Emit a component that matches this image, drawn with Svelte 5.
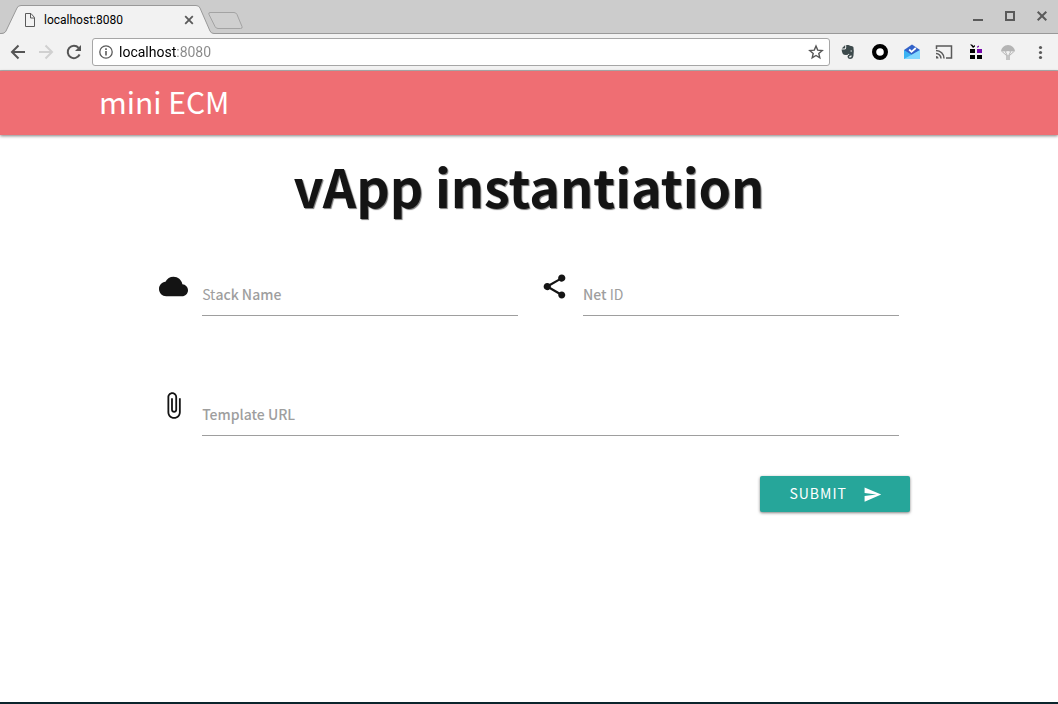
<script>
  let stackName = $state('');
  let netId = $state('');
  let templateUrl = $state('');
  let address = $state('localhost:8080');
</script>

<div class="window">
  <header class="tabstrip">
    <div class="tab">
      <svg class="tab-shape" viewBox="0 0 214 34" aria-hidden="true">
        <path d="M0 34 C3 34 5 33 6 31 L17 8 Q18 5.500 21 5.500 H196 Q199 5.500 200 8 L210 31 Q211 33.500 214 33.500 V34 Z" fill="#f2f2f2" />
        <path d="M0 33.500 C3 33.500 5 33 6 31 L17 8 Q18 5.500 21 5.500 H196 Q199 5.500 200 8 L210 31 Q211 33.500 214 33.500" fill="none" stroke="#999" />
      </svg>
      <svg class="page-icon" width="12" height="16" viewBox="0 0 12 16" fill="none" stroke="#5a5a5a" aria-hidden="true"><path d="M1.500 1.500h5.500l3.500 4v9h-9zM6.500 1.500v4.500h4" /></svg>
      <span class="tab-title">localhost:8080</span>
      <button class="tab-close" aria-label="Close tab">
        <svg width="10" height="10" viewBox="0 0 10 10" stroke="#5a5a5a" stroke-width="1.800"><path d="M1.200 1.200l7.600 7.600M8.800 1.200l-7.600 7.600" /></svg>
      </button>
    </div>
    <button class="new-tab" aria-label="New tab">
      <svg width="36" height="20" viewBox="0 0 36 20" fill="#cfcfcf" stroke="#a3a3a3"><path d="M2 2.500h24q2 0 3 2l5 12q.8 2-1.500 2H10q-2 0-3-2L1 4.500q-.8-2 1-2z" /></svg>
    </button>
    <div class="window-controls">
      <button aria-label="Minimize"><svg width="12" height="12" viewBox="0 0 12 12"><path d="M1 9h10v2H1z" fill="#5a5a5a" /></svg></button>
      <button aria-label="Maximize"><svg width="12" height="12" viewBox="0 0 12 12"><path d="M2 2h8v8H2z" fill="none" stroke="#5a5a5a" stroke-width="2" /></svg></button>
      <button aria-label="Close"><svg width="12" height="12" viewBox="0 0 12 12"><path d="M1.700 1.700l8.600 8.600M10.300 1.700l-8.600 8.600" stroke="#5a5a5a" stroke-width="2" /></svg></button>
    </div>
  </header>

  <div class="toolbar">
    <button class="nav-button" aria-label="Back">
      <svg width="16" height="16" viewBox="0 0 16 16" fill="none" stroke="#555" stroke-width="2"><path d="M15 8H2.500M8.500 1.500L2 8l6.500 6.500" /></svg>
    </button>
    <button class="nav-button" aria-label="Forward" disabled>
      <svg width="16" height="16" viewBox="0 0 16 16" fill="none" stroke="#d0d0d0" stroke-width="2"><path d="M1 8h12.500M7.500 1.500L14 8l-6.500 6.500" /></svg>
    </button>
    <button class="nav-button" aria-label="Reload">
      <svg width="16" height="16" viewBox="0 0 16 16"><path d="M13.600 10.500A6.200 6.200 0 1 1 12.600 3.800" fill="none" stroke="#555" stroke-width="2" /><path d="M15 1v6H9z" fill="#555" /></svg>
    </button>
    <div class="omnibox">
      <svg width="14" height="14" viewBox="0 0 14 14" fill="none" stroke="#5a5a5a" aria-hidden="true"><circle cx="7" cy="7" r="6.200" stroke-width="1.300" /><path d="M7 6v4.500M7 3.300v1.600" stroke-width="1.600" /></svg>
      <input class="address" aria-label="Address" bind:value={address} />
      <button class="star" aria-label="Bookmark this page">
        <svg width="16" height="16" viewBox="0 0 16 16" fill="none" stroke="#555" stroke-width="1.400"><path d="M8 2l1.700 4.100 4.500.4-3.400 2.900 1 4.400L8 11.500l-3.800 2.300 1-4.400-3.400-2.900 4.500-.4z" /></svg>
      </button>
    </div>
    <div class="extensions">
      <button aria-label="Notes">
        <svg width="16" height="16" viewBox="0 0 16 16"><path d="M5.200 1v2.600q0 1-1 1H1.800z" fill="#3d4a4c" /><path d="M6.200 1h2q1.300.2 1.700.8 3 .2 3.500 1.200.8 4 .1 8.500-.4 3.500-3.600 3.500-2.500-.2-2.400-2.400.1-2 2.800-2v1.400q-1.400 0-1.300 1 .2.600 1.200.6 1.500 0 1.500-2-1.800.2-2.700-1.300l-.5-.5-.6 1q-4 .5-5-.8-1-1.500-1.300-4.600h3.100q1.500-.2 1.500-2z" fill="#3d4a4c" /><circle cx="11.200" cy="7" r=".8" fill="#c9cfcf" /></svg>
      </button>
      <button aria-label="Ring">
        <svg width="16" height="16" viewBox="0 0 16 16"><circle cx="8" cy="8" r="5.900" fill="#fff" stroke="#000" stroke-width="4.200" /></svg>
      </button>
      <button aria-label="Inbox">
        <svg width="16" height="16" viewBox="0 0 16 16"><path d="M0 6l8-5.500L16 6v9H0z" fill="#3262c9" /><path d="M0 6l8 5 8-5v9H0z" fill="#3ab2f3" /><path d="M0 15l16-9v9z" fill="#83d7ff" /><path d="M5.200 5.500l2.300 2.300L11.800 4" fill="none" stroke="#fff" stroke-width="1.800" /></svg>
      </button>
      <button aria-label="Cast">
        <svg width="18" height="16" viewBox="0 0 18 16" fill="none" stroke="#5a5a5a" stroke-width="1.500"><path d="M1.500 5V2h15v12H11M1 6.500a8 8 0 0 1 8 8M1 9.500a5 5 0 0 1 5 5" /><path d="M1 12a2.500 2.500 0 0 1 2.500 2.500H1z" fill="#5a5a5a" stroke="none" /></svg>
      </button>
      <button aria-label="Gifts">
        <svg width="16" height="16" viewBox="0 0 16 16"><path d="M2 5h5v4H2zM2 11h5v4H2zM9 11h5v4H9zM2 .5h2l1.500 1.500L7 1v1.500L5 4 3.500 2z" fill="#000" /><path d="M9 5h5v4H9zM9 2.500l2-1v1.200L9.500 4z" fill="#7608ad" /></svg>
      </button>
      <button aria-label="Parachute">
        <svg width="16" height="16" viewBox="0 0 16 16"><path d="M1 7.500a7 6.500 0 0 1 14 0q-1.300-1-2.600 0-1.300-1-2.700 0Q8 6.500 6.300 7.500 5 6.500 3.600 7.500 2.300 6.500 1 7.500z" fill="#b4b4b4" /><path d="M1.500 7L7 12M14.500 7L9 12M5 7l2.500 5M11 7l-2.500 5" fill="none" stroke="#b4b4b4" /><path d="M6 11.500h4V16H6z" fill="#c4c4c4" /></svg>
      </button>
      <button aria-label="Menu">
        <svg width="16" height="16" viewBox="0 0 16 16" fill="#5a5a5a"><circle cx="8.500" cy="3.500" r="1.600" /><circle cx="8.500" cy="8.500" r="1.600" /><circle cx="8.500" cy="13.500" r="1.600" /></svg>
      </button>
    </div>
  </div>

  <nav class="app-bar"><a href="#home">mini ECM</a></nav>

  <main>
    <h1>vApp instantiation</h1>
    <form onsubmit={(e) => e.preventDefault()}>
      <div class="row">
        <div class="field">
          <svg viewBox="0 0 24 24" aria-hidden="true"><path d="M19.350 10.040C18.670 6.590 15.640 4 12 4 9.110 4 6.600 5.640 5.350 8.040 2.340 8.360 0 10.910 0 14c0 3.310 2.690 6 6 6h13c2.760 0 5-2.240 5-5 0-2.640-2.050-4.780-4.650-4.960z" /></svg>
          <div class="control">
            <input id="stack" bind:value={stackName} />
            {#if !stackName}<label for="stack"><span class="light">St</span>ack Name</label>{/if}
          </div>
        </div>
        <div class="field">
          <svg viewBox="0 0 24 24" aria-hidden="true"><path d="M18 16.080c-.76 0-1.440.3-1.960.77L8.910 12.700c.05-.23.09-.46.09-.7s-.04-.47-.09-.7l7.050-4.110c.54.5 1.250.81 2.040.81 1.660 0 3-1.340 3-3s-1.340-3-3-3-3 1.340-3 3c0 .24.04.47.09.7L8.040 9.810C7.500 9.310 6.790 9 6 9c-1.660 0-3 1.340-3 3s1.340 3 3 3c.79 0 1.500-.31 2.040-.81l7.120 4.160c-.05.21-.08.43-.08.65 0 1.610 1.310 2.920 2.920 2.920s2.920-1.310 2.920-2.920-1.310-2.920-2.920-2.920z" /></svg>
          <div class="control">
            <input id="net" bind:value={netId} />
            {#if !netId}<label for="net">Net <span class="light">ID</span></label>{/if}
          </div>
        </div>
      </div>
      <div class="row">
        <div class="field">
          <svg viewBox="0 0 24 24" aria-hidden="true"><path d="M16.500 6v11.500c0 2.210-1.790 4-4 4s-4-1.790-4-4V5c0-1.380 1.120-2.500 2.500-2.500s2.500 1.120 2.500 2.500v10.500c0 .55-.45 1-1 1s-1-.45-1-1V6H10v9.500c0 1.380 1.120 2.500 2.500 2.500s2.500-1.120 2.500-2.500V5c0-2.210-1.790-4-4-4S7 2.790 7 5v12.500c0 3.040 2.460 5.500 5.500 5.500s5.500-2.460 5.500-5.500V6h-1.500z" /></svg>
          <div class="control">
            <input id="template" bind:value={templateUrl} />
            {#if !templateUrl}<label for="template">Template URL</label>{/if}
          </div>
        </div>
      </div>
      <button class="submit" type="submit">
        <span>SUBMIT</span>
        <svg viewBox="0 0 24 24" aria-hidden="true"><path d="M2.010 21L23 12 2.010 3 2 10l15 2-15 2z" /></svg>
      </button>
    </form>
  </main>
  <footer></footer>
</div>

<style>
  :global(body) {
    margin: 0;
    background: #fff;
  }
  .window {
    min-height: 100vh;
    display: flex;
    flex-direction: column;
    font-family: "Noto Sans CJK SC", "Noto Sans", sans-serif;
    color: #141414;
  }
  button {
    display: flex;
    align-items: center;
    justify-content: center;
    padding: 0;
    border: 0;
    background: none;
    font: inherit;
  }
  svg {
    display: block;
    flex: none;
  }
  input {
    box-sizing: border-box;
    min-width: 0;
    outline: none;
  }
  .tabstrip {
    display: flex;
    height: 34px;
    background: #ccc;
    box-shadow: inset 0 -1px #999;
    font-family: Roboto, sans-serif;
  }
  .tab {
    position: relative;
    display: flex;
    align-items: center;
    box-sizing: border-box;
    width: 208px;
    padding: 6px 13px 0 24px;
  }
  .tab-shape {
    position: absolute;
    left: 0;
    top: 0;
    width: 214px;
    height: 34px;
  }
  .page-icon,
  .tab-title,
  .tab-close {
    position: relative;
  }
  .tab-title {
    flex: 1;
    margin-left: 8px;
    font-size: 12px;
    line-height: 16px;
    color: #000;
  }
  .tab-close {
    width: 12px;
    height: 16px;
  }
  .new-tab {
    padding-top: 6px;
  }
  .window-controls {
    display: flex;
    margin-left: auto;
  }
  .window-controls button {
    width: 32px;
    height: 32px;
  }
  .toolbar {
    display: flex;
    align-items: center;
    box-sizing: border-box;
    height: 37px;
    padding: 0 2px 0 4px;
    background: #f2f2f2;
    border-bottom: 1px solid #b3b3b3;
  }
  .nav-button {
    width: 28px;
    height: 28px;
  }
  .omnibox {
    flex: 1;
    display: flex;
    align-items: center;
    box-sizing: border-box;
    height: 28px;
    margin: 0 2px 0 4px;
    padding: 0 5px 0 6px;
    background: #fff;
    border: 1px solid #a6a6a6;
    border-radius: 3px;
  }
  .address {
    flex: 1;
    height: 24px;
    margin-left: 6px;
    padding: 0;
    border: 0;
    font: 14px Roboto, sans-serif;
    color: transparent;
    background: linear-gradient(90deg, #000 57px, #888 57px);
    -webkit-background-clip: text;
    background-clip: text;
    caret-color: #000;
  }
  .extensions {
    display: flex;
  }
  .extensions button {
    width: 32px;
    height: 32px;
  }
  .app-bar {
    position: relative;
    box-sizing: border-box;
    height: 64px;
    padding-left: 99px;
    background: #ef6e73;
    box-shadow: 0 1px 3px rgba(0, 0, 0, 0.5);
  }
  .app-bar a {
    color: #fff;
    font-size: 30px;
    line-height: 60px;
    text-decoration: none;
  }
  main {
    flex: 1;
  }
  h1 {
    margin: 19px 0 46px;
    font-size: 52px;
    font-weight: 700;
    line-height: 64px;
    text-align: center;
    text-shadow: 1px 1px 1px #777;
  }
  form {
    display: flex;
    flex-direction: column;
    width: 72%;
    margin: 0 auto;
  }
  .row {
    display: flex;
    margin-bottom: 75px;
  }
  .row + .row {
    margin-bottom: 40px;
  }
  .field {
    flex: 1;
    display: flex;
    gap: 14px;
    padding: 7px 11px 0;
  }
  .row + .row .field {
    padding-top: 0;
  }
  .field svg {
    width: 29px;
    height: 29px;
    fill: #141414;
  }
  .row:first-child .field svg {
    margin-top: 1px;
  }
  .control {
    position: relative;
    flex: 1;
    display: flex;
  }
  .control input {
    width: 100%;
    height: 45px;
    padding: 0;
    border: 0;
    border-bottom: 1px solid #9e9e9e;
    background: transparent;
    font: inherit;
    font-size: 14px;
  }
  .control label {
    position: absolute;
    left: 0;
    top: 12px;
    color: #9e9e9e;
    font-size: 14px;
    font-weight: 500;
    line-height: 22px;
    white-space: pre;
    cursor: text;
  }
  .light {
    font-weight: 400;
  }
  .submit {
    align-self: flex-end;
    gap: 16px;
    height: 36px;
    padding: 0 28px 0 29px;
    border-radius: 2px;
    background: #26a69a;
    box-shadow: 0 1px 3px rgba(0, 0, 0, 0.5);
    color: #fff;
    font-size: 14px;
    letter-spacing: 1px;
  }
  .submit span {
    padding-bottom: 3px;
  }
  .submit svg {
    width: 19px;
    height: 19px;
    fill: #fff;
  }
  footer {
    height: 2px;
    background: #0b252c;
  }
</style>
